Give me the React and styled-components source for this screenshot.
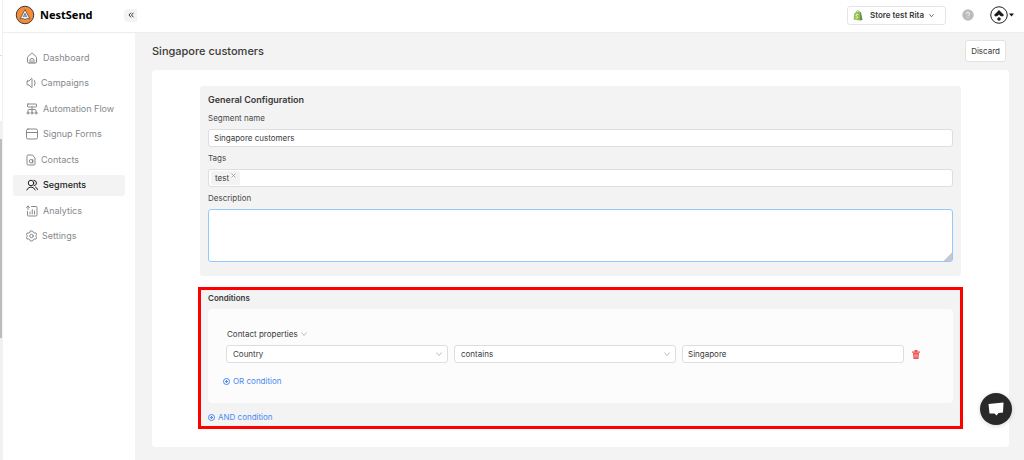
import React from "react";
import styled, { createGlobalStyle } from "styled-components";

const GlobalStyle = createGlobalStyle`
  *, *::before, *::after {
    box-sizing: border-box;
  }
  body {
    margin: 0;
    background: #f3f3f3;
    color: #3a3a3a;
    font-family: Inter, "Open Sans", sans-serif;
    font-size: 8px;
    line-height: 12px;
  }
  button, input, select, textarea {
    font: inherit;
    color: inherit;
    margin: 0;
  }
  h1, h2, h3 {
    margin: 0;
  }
`;

const Layout = styled.div`
  display: flex;
  min-height: 100vh;
`;

const Gutter = styled.div`
  display: flex;
  flex-direction: column;
  width: 3px;
  border-right: 1px solid #f1f1f1;
  background: #fff;
`;

const GutterTop = styled.div`
  height: 56px;
  border-bottom: 1px solid #ddd;
`;

const GutterTrack = styled.div`
  flex: 1;
  margin-top: 65px;
  padding-top: 18px;
  background: #f1f1f1;
`;

const GutterThumb = styled.div`
  height: 199px;
  background: #bdbdbd;
`;

const Shell = styled.div`
  flex: 1;
  min-width: 0;
  display: flex;
  flex-direction: column;
`;

const Header = styled.header`
  display: flex;
  align-items: center;
  height: 33px;
  padding: 0 10px 2px 12px;
  border-bottom: 1px solid #ededed;
  background: #fff;
`;

const Brand = styled.a`
  display: flex;
  align-items: center;
  gap: 5px;
  width: 109px;
  color: #000;
  font: 700 11px/16px "Noto Sans", sans-serif;
  text-decoration: none;
`;

const CollapseButton = styled.button`
  display: flex;
  align-items: center;
  justify-content: center;
  width: 13px;
  height: 13px;
  padding: 0;
  border: 0;
  border-radius: 4px 0 0 4px;
  background: #f3f3f3;
`;

const StoreButton = styled.button`
  display: flex;
  align-items: center;
  gap: 5px;
  height: 19px;
  margin-left: auto;
  padding: 0 11px 0 5px;
  border: 1px solid #e5e5e5;
  border-radius: 3px;
  background: #fff;
  font-weight: 600;

  span {
    margin-left: 2px;
  }
`;

const IconButton = styled.button`
  display: flex;
  align-items: center;
  gap: 1px;
  margin-left: 16px;
  padding: 0;
  border: 0;
  background: none;
`;

const Body = styled.div`
  flex: 1;
  display: flex;
`;

const Sidebar = styled.aside`
  width: 132px;
  padding: 14px 10px;
  background: #fff;
`;

const Nav = styled.nav`
  display: flex;
  flex-direction: column;
  justify-content: space-between;
  height: 200px;
`;

const NavLink = styled.a`
  display: flex;
  align-items: center;
  gap: 5px;
  height: 21px;
  padding-left: 13px;
  border-radius: 3px;
  background: ${(p) => (p.$active ? "#f3f3f3" : "transparent")};
  color: ${(p) => (p.$active ? "#222" : "#85898e")};
  font-size: 9px;
  font-weight: ${(p) => (p.$active ? 500 : 400)};
  text-decoration: none;
`;

const Main = styled.main`
  flex: 1;
  min-width: 0;
  padding: 7px 15px 13px 17px;
`;

const PageHead = styled.div`
  display: flex;
  align-items: center;
  justify-content: space-between;
  padding-right: 3px;
  margin-bottom: 8px;
`;

const PageTitle = styled.h1`
  font-size: 11px;
  font-weight: 500;
  line-height: 16px;
`;

const DiscardButton = styled.button`
  height: 22px;
  padding: 0 5px;
  border: 1px solid #e2e2e2;
  border-radius: 3px;
  background: #fff;
`;

const Card = styled.div`
  padding: 16px 48px 20px;
  border-radius: 4px;
  background: #fff;
`;

const Panel = styled.section`
  padding: ${(p) => (p.$marked ? "3px 8px" : "8px 8px 14px")};
  margin-top: ${(p) => (p.$marked ? "13px" : "0")};
  border-radius: ${(p) => (p.$marked ? "0" : "3px")};
  outline: ${(p) => (p.$marked ? "3px solid #fe0000" : "none")};
  outline-offset: -1px;
  background: #f3f3f3;
`;

const PanelTitle = styled.h2`
  font-size: ${(p) => (p.$small ? "8px" : "9px")};
  font-weight: 600;
  line-height: 12px;
`;

const Field = styled.div`
  display: flex;
  flex-direction: column;
  gap: 5px;
  margin-top: ${(p) => (p.$first ? "6px" : "5px")};
`;

const Label = styled.label`
  color: #4a4a4a;
`;

const Input = styled.input`
  width: 100%;
  height: 18px;
  padding: 0 5px;
  border: 1px solid #dedede;
  border-radius: 3px;
  background: #fff;
  outline: none;
`;

const TagBox = styled.div`
  display: flex;
  align-items: center;
  height: 18px;
  padding: 0 2px;
  border: 1px solid #dedede;
  border-radius: 3px;
  background: #fff;
`;

const Tag = styled.span`
  display: flex;
  align-items: center;
  gap: 2px;
  height: 14px;
  padding: 0 4px;
  border-radius: 2px;
  background: #f3f3f3;
`;

const TagRemove = styled.button`
  display: flex;
  align-self: flex-start;
  padding: 2px 0 0;
  border: 0;
  background: none;
`;

const TagInput = styled.input`
  flex: 1;
  min-width: 0;
  height: 14px;
  border: 0;
  background: none;
  outline: none;
`;

const TextArea = styled.textarea`
  display: block;
  width: 100%;
  height: 53px;
  padding: 3px 6px;
  border: 1px solid #91caff;
  border-radius: 3px;
  background: #fff;
  outline: none;
  resize: vertical;

  &::-webkit-resizer {
    background: linear-gradient(135deg, transparent 72%, #c8c8c8 72%);
  }
`;

const ConditionGroup = styled.div`
  margin: 5px 0 7px;
  padding: 19px 18px 15px;
  border-radius: 4px;
  background: #fcfcfc;
`;

const ConditionRow = styled.div`
  display: grid;
  grid-template-columns: 1fr 1fr 1fr 25px;
  gap: 6px;
  align-items: center;
  margin: 5px 0 11px;
`;

const SelectWrap = styled.div`
  display: grid;
  align-items: center;
  width: ${(p) => (p.$plain ? "max-content" : "auto")};

  select, svg {
    grid-area: 1 / 1;
  }
  svg {
    justify-self: end;
    margin-right: ${(p) => (p.$plain ? "0" : "6px")};
    pointer-events: none;
  }
`;

const Select = styled.select`
  appearance: none;
  width: 100%;
  height: ${(p) => (p.$plain ? "12px" : "18px")};
  padding: ${(p) => (p.$plain ? "0 9px 0 1px" : "0 6px")};
  border: ${(p) => (p.$plain ? "0" : "1px solid #dedede")};
  border-radius: 3px;
  background: ${(p) => (p.$plain ? "transparent" : "#fff")};
  outline: none;
`;

const DeleteButton = styled.button`
  display: flex;
  padding: 0 0 0 2px;
  border: 0;
  background: none;
`;

const AddButton = styled.button`
  display: flex;
  align-items: center;
  gap: 3px;
  height: 14px;
  margin-left: ${(p) => (p.$nested ? "-3px" : "0")};
  padding: 0;
  border: 0;
  background: none;
  color: #4a88f2;
`;

const ChatButton = styled.button`
  position: fixed;
  right: 12px;
  bottom: 35px;
  display: flex;
  align-items: center;
  justify-content: center;
  width: 32px;
  height: 32px;
  padding: 0;
  border: 0;
  border-radius: 50%;
  background: #292929;
  box-shadow: 0 1px 4px rgba(0, 0, 0, 0.16);
`;

const LineIcon = ({ width = 24, size = 12, stroke = 2, children }) => (
  <svg
    width={(size * width) / 24}
    height={size}
    viewBox={`0 0 ${width} 24`}
    fill="none"
    stroke="currentColor"
    strokeWidth={stroke}
    strokeLinecap="round"
    strokeLinejoin="round"
    aria-hidden="true"
  >
    {children}
  </svg>
);

const Chevron = ({ size = 6, color = "#b5b5b5" }) => (
  <svg width={size} height={size} viewBox="0 0 12 12" fill="none" stroke={color} strokeWidth="1.8" aria-hidden="true">
    <path d="M1 3l5 6 5-6" />
  </svg>
);

const PlusCircle = () => (
  <svg width="7" height="7" viewBox="0 0 14 14" fill="none" stroke="currentColor" strokeWidth="2" aria-hidden="true">
    <circle cx="7" cy="7" r="6" />
    <path d="M7 4v6M4 7h6" />
  </svg>
);

const NAV = [
  {
    label: "Dashboard",
    width: 24,
    icon: (
      <>
        <path d="M3 11q0-1 1-2l6.500-6q1.500-1.200 3 0L20 9q1 1 1 2v9q0 2-2 2H5q-2 0-2-2z" />
        <path d="M8 22v-6q0-3 4-3t4 3v6M12 17v5" />
      </>
    ),
  },
  {
    label: "Campaigns",
    width: 20,
    icon: (
      <>
        <path d="M3 8h3l5-5q1-.8 1 1v16q0 1.800-1 1l-5-5H3q-1 0-1-1V9q0-1 1-1z" />
        <path d="M17 7q3 5 0 10" />
      </>
    ),
  },
  {
    label: "Automation Flow",
    width: 24,
    icon: (
      <>
        <rect x="3" y="2" width="18" height="6" rx="1" />
        <path d="M12 8v10M4 17v-2q0-2 2-2h12q2 0 2 2v2" />
        <circle cx="4" cy="20" r="2" />
        <circle cx="12" cy="20" r="2" />
        <circle cx="20" cy="20" r="2" />
      </>
    ),
  },
  {
    label: "Signup Forms",
    width: 24,
    icon: (
      <>
        <rect x="1" y="2" width="22" height="20" rx="3" />
        <path d="M1 9h22" />
      </>
    ),
  },
  {
    label: "Contacts",
    width: 20,
    icon: (
      <>
        <path d="M2 4a2 2 0 0 1 2-2h9l5 6v12a2 2 0 0 1-2 2H4a2 2 0 0 1-2-2z" />
        <circle cx="10" cy="14.500" r="3.500" />
        <path d="M13.500 11v7" />
      </>
    ),
  },
  {
    label: "Segments",
    width: 24,
    active: true,
    icon: (
      <>
        <circle cx="10" cy="8" r="5.500" />
        <path d="M16 2.500q5 1 5 5.500t-5 5.500M1.500 22q3-6 8.500-6t8.500 6M19 16q3 1 4 5" />
      </>
    ),
  },
  {
    label: "Analytics",
    width: 24,
    icon: (
      <>
        <path d="M11 3h9q2 0 2 2v15q0 2-2 2H5q-2 0-2-2v-7" />
        <path d="M4 9V2M1 5l3-3 3 3M8 18v-4M12.500 18V9M17 18v-6" />
      </>
    ),
  },
  {
    label: "Settings",
    width: 22,
    icon: (
      <>
        <path d="M9 2h4l1.500 3 2 1 3.500 0 1.500 3.500L19 12l2.500 2.500L20 18h-3.500l-2 1L13 22H9l-1.500-3-2-1H2L.8 14.500 3 12 .8 9.500 2 6h3.500l2-1z" />
        <circle cx="11" cy="12" r="3.500" />
      </>
    ),
  },
];

const Logo = () => (
  <svg width="20" height="20" viewBox="0 0 40 40" aria-hidden="true">
    <circle cx="20" cy="20" r="17.500" fill="#f98b35" stroke="#3c3c3c" strokeWidth="2" />
    <path d="M20 9L10 28l5-1 5 2 5-2 5 1z" fill="#e6eef2" stroke="#3f4a50" strokeWidth="1.500" strokeLinejoin="round" />
    <path d="M17 23l3-6 3 6-3-1z" fill="#fff" stroke="#3f4a50" strokeWidth="1.500" />
  </svg>
);

const StoreIcon = () => (
  <svg width="10" height="11" viewBox="0 0 20 22" aria-hidden="true">
    <path d="M3 6l10-3 1 18L1 19z" fill="#95bf47" />
    <path d="M13 3l3 2 3 15-5 1z" fill="#5e8e3e" />
    <path d="M6 6q1-5 4-5 2 0 2 4" fill="none" stroke="#7fae3d" strokeWidth="1.500" />
    <path d="M10.500 9q-4-1.500-4.500 1.500c0 2 3.500 2 3 4.500q-1 2.500-4 .5" fill="none" stroke="#fff" strokeWidth="1.800" />
  </svg>
);

const Avatar = () => (
  <svg width="18" height="18" viewBox="0 0 36 36" aria-hidden="true">
    <circle cx="18" cy="18" r="16.500" fill="#fff" stroke="#222" strokeWidth="2" />
    <path d="M18 8l10 10-3 3-4-1-3-3-3 3-4 1-3-3z" fill="#1c1c1c" />
    <circle cx="18" cy="26" r="3.500" fill="#1c1c1c" />
  </svg>
);

const ConditionSelect = ({ label, value }) => (
  <SelectWrap>
    <Select aria-label={label} defaultValue={value}>
      <option>{value}</option>
    </Select>
    <Chevron />
  </SelectWrap>
);

export default () => {
  return (
    <Layout>
      <GlobalStyle />
      <Gutter>
        <GutterTop />
        <GutterTrack>
          <GutterThumb />
        </GutterTrack>
      </Gutter>
      <Shell>
        <Header>
          <Brand href="#">
            <Logo />
            NestSend
          </Brand>
          <CollapseButton aria-label="Collapse menu">
            <LineIcon size={6} stroke={4}>
              <path d="M11 4l-7 8 7 8M21 4l-7 8 7 8" />
            </LineIcon>
          </CollapseButton>
          <StoreButton>
            <StoreIcon />
            <span>Store test Rita</span>
            <Chevron size={5} color="#444" />
          </StoreButton>
          <IconButton aria-label="Help">
            <svg width="12" height="12" viewBox="0 0 24 24" fill="none" aria-hidden="true">
              <circle cx="12" cy="12" r="11.500" fill="#bcbcbc" />
              <path d="M9 9.500a3 3 0 1 1 4.500 2.500q-1.500 1-1.500 2.500M12 17v1.500" stroke="#fff" strokeWidth="2" />
            </svg>
          </IconButton>
          <IconButton aria-label="Account">
            <Avatar />
            <svg width="5" height="4" viewBox="0 0 10 8" aria-hidden="true">
              <path d="M0 1h10L5 7z" fill="#111" />
            </svg>
          </IconButton>
        </Header>
        <Body>
          <Sidebar>
            <Nav>
              {NAV.map((item) => (
                <NavLink key={item.label} href="#" $active={item.active}>
                  <LineIcon width={item.width}>{item.icon}</LineIcon>
                  {item.label}
                </NavLink>
              ))}
            </Nav>
          </Sidebar>
          <Main>
            <PageHead>
              <PageTitle>Singapore customers</PageTitle>
              <DiscardButton>Discard</DiscardButton>
            </PageHead>
            <Card>
              <Panel>
                <PanelTitle>General Configuration</PanelTitle>
                <Field $first>
                  <Label htmlFor="name">Segment name</Label>
                  <Input id="name" defaultValue="Singapore customers" />
                </Field>
                <Field>
                  <Label htmlFor="tags">Tags</Label>
                  <TagBox>
                    <Tag>
                      test
                      <TagRemove aria-label="Remove tag">
                        <svg width="5" height="5" viewBox="0 0 10 10" stroke="#999" strokeWidth="1.500" aria-hidden="true">
                          <path d="M1 1l8 8M9 1L1 9" />
                        </svg>
                      </TagRemove>
                    </Tag>
                    <TagInput id="tags" />
                  </TagBox>
                </Field>
                <Field>
                  <Label htmlFor="description">Description</Label>
                  <TextArea id="description" />
                </Field>
              </Panel>
              <Panel $marked>
                <PanelTitle $small>Conditions</PanelTitle>
                <ConditionGroup>
                  <SelectWrap $plain>
                    <Select $plain aria-label="Property type">
                      <option>Contact properties</option>
                    </Select>
                    <Chevron />
                  </SelectWrap>
                  <ConditionRow>
                    <ConditionSelect label="Property" value="Country" />
                    <ConditionSelect label="Operator" value="contains" />
                    <Input aria-label="Value" defaultValue="Singapore" />
                    <DeleteButton aria-label="Delete condition">
                      <svg width="8" height="9" viewBox="0 0 16 18" fill="none" aria-hidden="true">
                        <path d="M0 3h16v2.500H0zM5 0h6v3H5z" fill="#f05252" />
                        <path d="M2 6h12l-1 12H3z" fill="#f05252" />
                        <path d="M6 8.500v6.500M10 8.500v6.500" stroke="#fcdcdc" strokeWidth="1.500" />
                      </svg>
                    </DeleteButton>
                  </ConditionRow>
                  <AddButton $nested>
                    <PlusCircle />
                    OR condition
                  </AddButton>
                </ConditionGroup>
                <AddButton>
                  <PlusCircle />
                  AND condition
                </AddButton>
              </Panel>
            </Card>
          </Main>
        </Body>
      </Shell>
      <ChatButton aria-label="Open chat">
        <svg width="16" height="14" viewBox="0 0 32 28" aria-hidden="true">
          <path d="M1 4l30-3-1 20-9 1-4 5-4-4-10 0z" fill="#fff" />
        </svg>
      </ChatButton>
    </Layout>
  );
};
